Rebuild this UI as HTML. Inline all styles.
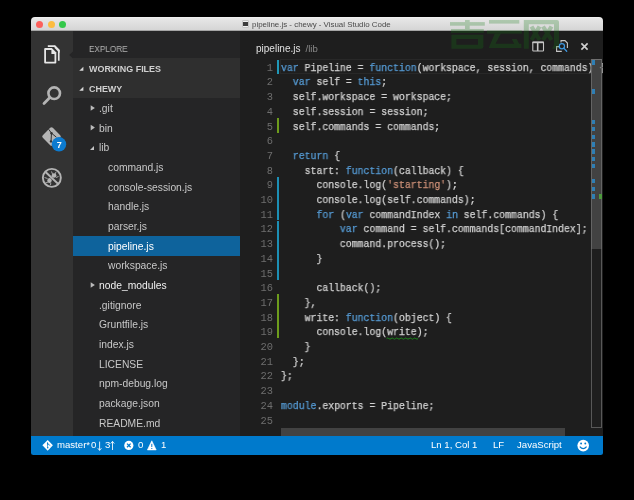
<!DOCTYPE html>
<html><head><meta charset="utf-8">
<style>
*{margin:0;padding:0;box-sizing:border-box}
html,body{width:634px;height:500px;background:#000;overflow:hidden;font-family:"Liberation Sans",sans-serif}
.a{position:absolute}
#win{position:absolute;left:31px;top:17.5px;width:571px;height:437.5px;border-radius:4px;overflow:hidden;background:#1e1e1e}
#title{left:31px;top:17.4px;width:571.6px;height:13.6px;background:linear-gradient(#f2f2f2 0,#e6e6e6 12%,#d4d4d4 100%);border-radius:4px 4px 0 0}
#titleb{left:31px;top:30px;width:571.6px;height:1px;background:#a5a5a5}
.tl{width:7px;height:7px;border-radius:50%;top:21px}
.ttl{left:252px;top:19px;font-size:7.92px;color:#4a4a4a;white-space:nowrap;line-height:11px}
#act{left:31px;top:31px;width:41.5px;height:405px;background:#333}
#side{left:72.5px;top:31px;width:167.5px;height:405px;background:#252526}
#sideh{left:72.5px;top:31px;width:167.5px;height:27px;background:#252526}
#edit{left:240px;top:31px;width:362.6px;height:405px;background:#1e1e1e}
#status{left:31px;top:436px;width:571.6px;height:18.5px;background:#007acc;border-radius:0 0 2.5px 2.5px}
.st{top:436px;line-height:18.5px;font-size:9.6px;color:#fff;white-space:nowrap}
.hdr{left:72.5px;width:167.5px;height:19.8px;background:#2f2f2f}
.hdrt{left:89px;line-height:20px;font-weight:bold;color:#d0d0d0;font-size:8.95px;white-space:nowrap}
.tri{width:0;height:0;border-left:5px solid transparent;border bottom:5px solid #c5c5c5}
.row{height:19.68px;line-height:19.68px;font-size:10.3px;color:#c8c8c8;white-space:nowrap}
.rs{color:#fff}
.sel{left:72.5px;width:167.5px;height:19.8px;background:#0e639c}
.arr{width:0;height:0;border-top:2.7px solid transparent;border-bottom:2.7px solid transparent;border-left:3.8px solid #bdbdbd}
.arrd{width:0;height:0;border-left:4px solid transparent;border-bottom:4px solid #c5c5c5}
.code{position:absolute;left:280.7px;font-family:"Liberation Mono",monospace;font-size:10.4px;white-space:pre;color:#d4d4d4;line-height:14.7px;height:14.7px;transform:scaleX(0.9455);-webkit-text-stroke:0.25px currentColor;transform-origin:0 0}
.ln{position:absolute;left:240px;width:33px;text-align:right;font-family:"Liberation Mono",monospace;font-size:10.4px;color:#6e6e6e;line-height:14.7px}
.k{color:#569cd6}
.s{color:#ce9178}
.w{}
.expl{left:89px;top:43.8px;font-size:9.5px;color:#b4b4b4;line-height:10px;white-space:nowrap;transform:scaleX(0.86);transform-origin:0 0}
.etitle{left:256px;top:41.9px;font-size:10px;color:#e0e0e0;line-height:14px;white-space:nowrap}
.rh{color:#f0f0f0}
#root{position:absolute;left:0;top:0;width:634px;height:500px}
.row,.code,.ln,.st,.hdrt,.expl,.etitle,.ttl{will-change:transform}

</style></head><body>
<div id="title" class="a"></div>
<div id="titleb" class="a"></div>
<div class="a tl" style="left:36.2px;background:#fc605c"></div>
<div class="a tl" style="left:47.7px;background:#fdbc40"></div>
<div class="a tl" style="left:59.1px;background:#34c84a"></div>
<div class="a" style="left:242px;top:19.6px;width:7.4px;height:8.8px;background:#f0f0f0;border:0.6px solid #c4c4c4;border-radius:1px"></div>
<div class="a" style="left:242.9px;top:21.9px;width:5.4px;height:4.2px;background:#3c3c3c"></div>
<div class="a ttl">pipeline.js - chewy - Visual Studio Code</div>
<div id="act" class="a"></div>
<div id="side" class="a"></div>
<div id="sideh" class="a"></div>
<div class="a expl">EXPLORE</div>
<div class="a hdr" style="top:58.4px"></div>
<div class="a hdr" style="top:78.2px"></div>
<div class="a hdrt" style="top:58.6px">WORKING FILES</div>
<div class="a hdrt" style="top:78.6px">CHEWY</div>
<svg class="a" style="left:0;top:0" width="634" height="500"><polygon points="90.70,105.14 94.90,107.94 90.70,110.74" fill="#bababa"/></svg>
<div class="a row" style="left:98.5px;top:98.85px">.git</div>
<svg class="a" style="left:0;top:0" width="634" height="500"><polygon points="90.70,124.82 94.90,127.62 90.70,130.42" fill="#bababa"/></svg>
<div class="a row" style="left:98.5px;top:118.53px">bin</div>
<div class="a arrd" style="left:90.0px;top:145.70px"></div>
<div class="a row" style="left:98.5px;top:138.21px">lib</div>
<div class="a row" style="left:108.4px;top:157.89px">command.js</div>
<div class="a row" style="left:108.4px;top:177.57px">console-session.js</div>
<div class="a row" style="left:108.4px;top:197.25px">handle.js</div>
<div class="a row" style="left:108.4px;top:216.93px">parser.js</div>
<div class="a sel" style="top:235.76px"></div>
<div class="a row rs" style="left:108.4px;top:236.61px">pipeline.js</div>
<div class="a row" style="left:108.4px;top:256.29px">workspace.js</div>
<svg class="a" style="left:0;top:0" width="634" height="500"><polygon points="90.70,282.26 94.90,285.06 90.70,287.86" fill="#bababa"/></svg>
<div class="a row rh" style="left:98.5px;top:275.97px">node_modules</div>
<div class="a row" style="left:98.5px;top:295.65px">.gitignore</div>
<div class="a row" style="left:98.5px;top:315.33px">Gruntfile.js</div>
<div class="a row" style="left:98.5px;top:335.01px">index.js</div>
<div class="a row" style="left:98.5px;top:354.69px">LICENSE</div>
<div class="a row" style="left:98.5px;top:374.37px">npm-debug.log</div>
<div class="a row" style="left:98.5px;top:394.05px">package.json</div>
<div class="a row" style="left:98.5px;top:413.73px">README.md</div>
<div id="edit" class="a"></div>
<div class="a etitle">pipeline.js<span style="color:#8a8a8a;font-size:9.6px;margin-left:5px">/lib</span></div>
<div class="a" style="left:279.5px;top:59px;width:311px;height:14.7px;border:1px solid #282828"></div>
<div class="ln" style="top:60.70px">1</div>
<div class="code" style="top:60.70px"><span class="k">var</span> Pipeline = <span class="k">function</span>(workspace, session, commands) {</div>
<div class="ln" style="top:75.40px">2</div>
<div class="code" style="top:75.40px">  <span class="k">var</span> self = <span class="k">this</span>;</div>
<div class="ln" style="top:90.10px">3</div>
<div class="code" style="top:90.10px">  self.workspace = workspace;</div>
<div class="ln" style="top:104.80px">4</div>
<div class="code" style="top:104.80px">  self.session = session;</div>
<div class="ln" style="top:119.50px">5</div>
<div class="code" style="top:119.50px">  self.commands = commands;</div>
<div class="ln" style="top:134.20px">6</div>
<div class="code" style="top:134.20px"></div>
<div class="ln" style="top:148.90px">7</div>
<div class="code" style="top:148.90px">  <span class="k">return</span> {</div>
<div class="ln" style="top:163.60px">8</div>
<div class="code" style="top:163.60px">    start: <span class="k">function</span>(callback) {</div>
<div class="ln" style="top:178.30px">9</div>
<div class="code" style="top:178.30px">      console.log(<span class="s">&#x27;starting&#x27;</span>);</div>
<div class="ln" style="top:193.00px">10</div>
<div class="code" style="top:193.00px">      console.log(self.commands);</div>
<div class="ln" style="top:207.70px">11</div>
<div class="code" style="top:207.70px">      <span class="k">for</span> (<span class="k">var</span> commandIndex <span class="k">in</span> self.commands) {</div>
<div class="ln" style="top:222.40px">12</div>
<div class="code" style="top:222.40px">          <span class="k">var</span> command = self.commands[commandIndex];</div>
<div class="ln" style="top:237.10px">13</div>
<div class="code" style="top:237.10px">          command.process();</div>
<div class="ln" style="top:251.80px">14</div>
<div class="code" style="top:251.80px">      }</div>
<div class="ln" style="top:266.50px">15</div>
<div class="code" style="top:266.50px"></div>
<div class="ln" style="top:281.20px">16</div>
<div class="code" style="top:281.20px">      callback();</div>
<div class="ln" style="top:295.90px">17</div>
<div class="code" style="top:295.90px">    },</div>
<div class="ln" style="top:310.60px">18</div>
<div class="code" style="top:310.60px">    write: <span class="k">function</span>(object) {</div>
<div class="ln" style="top:325.30px">19</div>
<div class="code" style="top:325.30px">      console.log(<span class="w">write</span>);</div>
<div class="ln" style="top:340.00px">20</div>
<div class="code" style="top:340.00px">    }</div>
<div class="ln" style="top:354.70px">21</div>
<div class="code" style="top:354.70px">  };</div>
<div class="ln" style="top:369.40px">22</div>
<div class="code" style="top:369.40px">};</div>
<div class="ln" style="top:384.10px">23</div>
<div class="code" style="top:384.10px"></div>
<div class="ln" style="top:398.80px">24</div>
<div class="code" style="top:398.80px"><span class="k">module</span>.exports = Pipeline;</div>
<div class="ln" style="top:413.50px">25</div>
<div class="code" style="top:413.50px"></div>
<div class="a" style="left:277px;top:59.5px;width:2px;height:14px;background:#1f98b8"></div>

<div class="a" style="left:276.5px;top:118px;width:2.7px;height:14.7px;background:#6d9c1c"></div>
<div class="a" style="left:276.5px;top:176.8px;width:2.7px;height:43.4px;background:#1c8fb5"></div>
<div class="a" style="left:276.5px;top:221.4px;width:2.7px;height:58.3px;background:#1c8fb5"></div>
<div class="a" style="left:276.5px;top:294.4px;width:2.7px;height:44.1px;background:#6d9c1c"></div>
<div class="a" style="left:602.6px;top:31px;width:32px;height:405px;background:#000"></div>
<div class="a" style="left:591px;top:59.3px;width:11px;height:369px;border:1px solid #585858;border-top-color:#6a6a6a"></div>
<div class="a" style="left:591px;top:59.3px;width:11px;height:190px;background:rgba(121,121,121,0.4)"></div>
<div class="a" style="left:591.8px;top:60.0px;width:3.4px;height:4.8px;background:#2f7fb5"></div>
<div class="a" style="left:591.8px;top:89.4px;width:3.4px;height:4.8px;background:#2f7fb5"></div>
<div class="a" style="left:591.8px;top:119.5px;width:3.4px;height:4.8px;background:#2f7fb5"></div>
<div class="a" style="left:591.8px;top:126.6px;width:3.4px;height:4.8px;background:#2f7fb5"></div>
<div class="a" style="left:591.8px;top:134.6px;width:3.4px;height:4.8px;background:#2f7fb5"></div>
<div class="a" style="left:591.8px;top:141.8px;width:3.4px;height:4.8px;background:#2f7fb5"></div>
<div class="a" style="left:591.8px;top:149.0px;width:3.4px;height:4.8px;background:#2f7fb5"></div>
<div class="a" style="left:591.8px;top:156.7px;width:3.4px;height:4.8px;background:#2f7fb5"></div>
<div class="a" style="left:591.8px;top:163.7px;width:3.4px;height:4.8px;background:#2f7fb5"></div>
<div class="a" style="left:591.8px;top:178.6px;width:3.4px;height:4.8px;background:#2f7fb5"></div>
<div class="a" style="left:591.8px;top:186.6px;width:3.4px;height:4.8px;background:#2f7fb5"></div>
<div class="a" style="left:591.8px;top:193.8px;width:3.4px;height:4.8px;background:#2f7fb5"></div>
<div class="a" style="left:598.8px;top:193.8px;width:3.2px;height:4.8px;background:#4e9a3e"></div>
<div class="a" style="left:281px;top:428.3px;width:284px;height:7.7px;background:rgba(121,121,121,0.4)"></div>
<div id="status" class="a"></div>
<div class="a st" style="left:56.5px">master*</div>
<div class="a st" style="left:91.4px">0</div>
<div class="a st" style="left:104.6px">3</div>
<div class="a st" style="left:137.6px">0</div>
<div class="a st" style="left:161.4px">1</div>
<div class="a st" style="left:430.5px">Ln 1, Col 1</div>
<div class="a st" style="left:492.5px">LF</div>
<div class="a st" style="left:517.4px">JavaScript</div>
<svg class="a" style="left:0;top:0" width="634" height="500" viewBox="0 0 634 500">
  <!-- notch -->
  <polygon points="73,51.4 69.2,55 73,58.6" fill="#252526"/>
  <!-- header triangles -->
  <polygon points="83.4,66.8 83.4,70.8 79.2,70.8" fill="#d8d8d8"/>
  <polygon points="83.4,86.8 83.4,90.8 79.2,90.8" fill="#d8d8d8"/>
  <!-- files icon -->
  <polyline points="47.8,46.15 54.8,46.15 58.75,50.1 58.75,60.7" fill="none" stroke="#e6e6e6" stroke-width="1.7"/>
  <polygon points="54.6,45.3 59.6,50.3 59.6,53 54.6,48" fill="#e6e6e6"/>
  <path d="M45.4,47.3 H52.2 L57.2,52.3 V64.3 H43.4 V47.3 Z" fill="#333"/>
  <path d="M45.2,48.1 H51.8 L56.3,52.6 V62.5 Q56.3,63.5 55.3,63.5 H45.2 Q44.2,63.5 44.2,62.5 V49.1 Q44.2,48.1 45.2,48.1 Z" fill="#e6e6e6"/>
  <path d="M46,49.9 H51.4 V54.1 H54.5 V61.7 H46 Z" fill="#333"/>
  <!-- search icon -->
  <circle cx="54.2" cy="93.2" r="5.8" fill="none" stroke="#b4b4b4" stroke-width="2.6"/>
  <line x1="44" y1="103.4" x2="49.6" y2="97.8" stroke="#b4b4b4" stroke-width="2.8" stroke-linecap="round"/>
  <!-- git icon -->
  <path d="M50.2,127.8 Q51.5,126.5 52.8,127.8 L60.2,135.2 Q61.5,136.5 60.2,137.8 L52.8,145.2 Q51.5,146.5 50.2,145.2 L42.8,137.8 Q41.5,136.5 42.8,135.2 Z" fill="#b4b4b4"/>
  <polyline points="48.6,129.2 51.5,133.2 51,141.4" fill="none" stroke="#333" stroke-width="1"/>
  <line x1="51.5" y1="133.2" x2="56.4" y2="137.2" stroke="#333" stroke-width="1"/>
  <circle cx="51.5" cy="133.2" r="1.2" fill="#333"/>
  <circle cx="51" cy="141.4" r="1.2" fill="#333"/>
  <circle cx="59" cy="144.3" r="7.2" fill="#0c7bd0"/>
  <text x="59.2" y="147.6" font-family="Liberation Sans" font-size="9" font-weight="bold" fill="#fff" text-anchor="middle">7</text>
  <!-- debug icon -->
  <circle cx="51.85" cy="177.85" r="9" fill="none" stroke="#b4b4b4" stroke-width="1.9"/>
  <line x1="45.8" y1="172.2" x2="58" y2="183.8" stroke="#b4b4b4" stroke-width="1.9"/>
  <ellipse cx="49.5" cy="180.5" rx="2.2" ry="2.6" fill="#b4b4b4"/>
  <ellipse cx="54" cy="175.5" rx="2.4" ry="2.2" fill="#b4b4b4"/>
  <path d="M44.5,177.5 L47.5,178.5 M45.5,183 L48,182 M50.5,185 L50.8,183 M51.5,171.5 L52.5,174 M56,172 L55,174 M58.5,176.5 L56,177.5" stroke="#b4b4b4" stroke-width="0.9"/>
  <!-- split editor -->
  <rect x="532.8" y="42.1" width="10.7" height="8.9" rx="0.6" fill="none" stroke="#c5c5c5" stroke-width="1.1"/>
  <rect x="532.4" y="41.7" width="11.5" height="1.5" fill="#c5c5c5"/>
  <line x1="537.7" y1="42" x2="537.7" y2="51" stroke="#c5c5c5" stroke-width="1.6"/>
  <!-- open changes -->
  <path d="M560,46.6 H556.6 V51.4 H561.8" fill="none" stroke="#c5c5c5" stroke-width="1.1"/>
  <path d="M561,42.5 V40.6 H565 L567.4,43 V48" fill="none" stroke="#c5c5c5" stroke-width="1.1"/>
  <circle cx="561.9" cy="46.2" r="2.6" fill="none" stroke="#3e98e0" stroke-width="1.2"/>
  <line x1="563.8" y1="48.1" x2="566.7" y2="51.3" stroke="#3e98e0" stroke-width="1.3" stroke-linecap="round"/>
  <!-- close -->
  <path d="M581.4,43.4 L587.6,49.6 M587.6,43.4 L581.4,49.6" stroke="#d0d0d0" stroke-width="1.6"/>
  <!-- status icons -->
  <path d="M47.7,439.9 L52.9,445.3 L47.7,450.7 L42.4,445.3 Z" fill="#fff"/>
  <polyline points="47.5,442.2 47.7,447.8" fill="none" stroke="#007acc" stroke-width="0.75"/>
  <line x1="47.6" y1="443.8" x2="50.3" y2="445.6" stroke="#007acc" stroke-width="0.75"/>
  <circle cx="47.6" cy="443.8" r="0.75" fill="#007acc"/>
  <circle cx="47.7" cy="447.8" r="0.75" fill="#007acc"/>
  <path d="M99.6,441.6 V450.2 M97.8,448.2 L99.6,450.4 L101.4,448.2" fill="none" stroke="#fff" stroke-width="0.85"/>
  <path d="M112.5,450 V441.5 M110.7,443.6 L112.5,441.4 L114.3,443.6" fill="none" stroke="#fff" stroke-width="0.85"/>
  <circle cx="128.8" cy="445.4" r="4.6" fill="#fff"/>
  <path d="M127,443.6 L130.6,447.2 M130.6,443.6 L127,447.2" stroke="#007acc" stroke-width="1.3"/>
  <path d="M151.8,440.8 L156.2,449.9 H147.4 Z" fill="#fff" stroke="#fff" stroke-width="0.6" stroke-linejoin="round"/>
  <path d="M151.8,443.8 V447 M151.8,448 V449" stroke="#007acc" stroke-width="1"/>
  <circle cx="583.2" cy="445.6" r="5.8" fill="#fff"/>
  <circle cx="581.1" cy="443.5" r="0.95" fill="#007acc"/>
  <circle cx="585.3" cy="443.5" r="0.95" fill="#007acc"/>
  <path d="M579.8,446.6 Q583.2,450.6 586.6,446.6" fill="none" stroke="#007acc" stroke-width="1.2"/>
  <path d="M386.6,338.6 q1.1,-1.2 2.25,0 q1.1,1.2 2.25,0 q1.1,-1.2 2.25,0 q1.1,1.2 2.25,0 q1.1,-1.2 2.25,0 q1.1,1.2 2.25,0 q1.1,-1.2 2.25,0 q1.1,1.2 2.25,0 q1.1,-1.2 2.25,0 q1.1,1.2 2.25,0 q1.1,-1.2 2.25,0 q1.1,1.2 2.25,0 q1.1,-1.2 2.25,0 q1.1,1.2 2.25,0" fill="none" stroke="#1c8a1c" stroke-width="1"/>
  <!-- watermark -->
  <g opacity="0.26"><g fill="#167816" stroke="none">
    <rect x="465" y="20" width="4.7" height="9"/>
    <rect x="450" y="22.1" width="34.8" height="3.6"/>
    <rect x="451" y="29" width="32.8" height="3.9"/>
    <path fill-rule="evenodd" d="M451.4,34.8 H483.4 V46.7 Q483.4,48.7 481.4,48.7 H451.4 Z M456.4,39 V44.8 H478 V39 Z"/>
    <rect x="489" y="20" width="30.3" height="3.6"/>
    <rect x="486.9" y="30.4" width="34.9" height="3.2"/>
    <path d="M494.8,33.6 H500.9 L495.5,43.7 H521.4 V48 H488.7 Z"/>
    <path d="M511.7,39 H516.7 L521.4,48 H516.4 Z"/>
    <path d="M523.8,20 H557 Q559,20 559,22 V45 Q559,48.7 555,48.7 H552 L554,45 V24.3 H528.8 V48.7 H523.8 Z"/>
  </g>
  <g stroke="#167816" stroke-width="4.2" stroke-linecap="butt">
    <path d="M531.5,26.5 L539.5,40 M539.5,26.5 L531.5,40 M543,26.5 L551.5,40 M551.5,26.5 L543,40"/>
  </g></g>
</svg>

</body></html>
